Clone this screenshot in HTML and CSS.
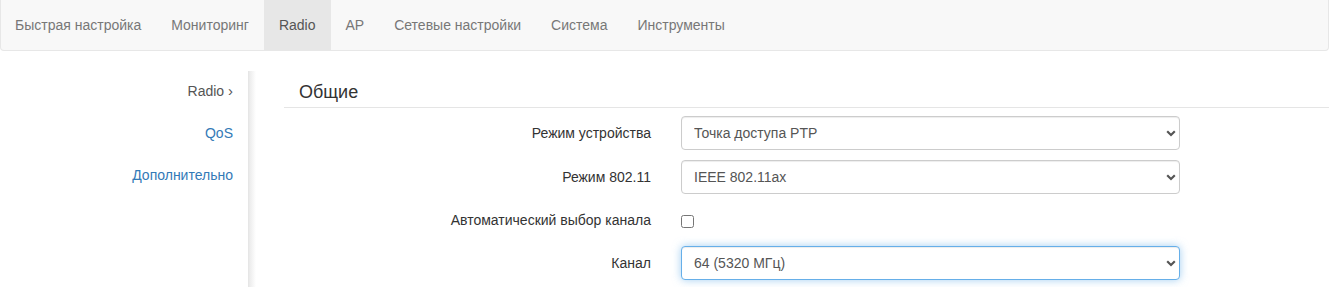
FILE: index.html
```html
<!DOCTYPE html>
<html lang="ru">
<head>
<meta charset="utf-8">
<title>Radio</title>
<link rel="stylesheet" href="styles.css">
</head>
<body>
<nav class="navbar">
  <ul class="nav-menu">
    <li><a href="#">Быстрая настройка</a></li>
    <li><a href="#">Мониторинг</a></li>
    <li class="active"><a href="#">Radio</a></li>
    <li><a href="#">AP</a></li>
    <li><a href="#">Сетевые настройки</a></li>
    <li><a href="#">Система</a></li>
    <li><a href="#">Инструменты</a></li>
  </ul>
</nav>
<div class="page">
  <aside class="sidebar">
    <ul class="side-nav">
      <li class="current"><a href="#">Radio <span class="caret">›</span></a></li>
      <li><a href="#">QoS</a></li>
      <li><a href="#">Дополнительно</a></li>
    </ul>
  </aside>
  <main class="main">
    <h4 class="section-title">Общие</h4>
    <form class="form">
      <div class="row">
        <label class="label">Режим устройства</label>
        <div class="select-wrap">
          <select class="select"><option>Точка доступа PTP</option></select>
          <svg class="chev" width="10" height="7" viewBox="0 0 10 7"><path d="M1.2 1.3 L5 5 L8.8 1.3" fill="none" stroke="#555" stroke-width="2.2"/></svg>
        </div>
      </div>
      <div class="row">
        <label class="label">Режим 802.11</label>
        <div class="select-wrap">
          <select class="select"><option>IEEE 802.11ax</option></select>
          <svg class="chev" width="10" height="7" viewBox="0 0 10 7"><path d="M1.2 1.3 L5 5 L8.8 1.3" fill="none" stroke="#555" stroke-width="2.2"/></svg>
        </div>
      </div>
      <div class="row row-check">
        <label class="label">Автоматический выбор канала</label>
        <div class="check-wrap"><input type="checkbox" class="check"></div>
      </div>
      <div class="row">
        <label class="label">Канал</label>
        <div class="select-wrap">
          <select class="select focus"><option>64 (5320 МГц)</option></select>
          <svg class="chev" width="10" height="7" viewBox="0 0 10 7"><path d="M1.2 1.3 L5 5 L8.8 1.3" fill="none" stroke="#555" stroke-width="2.2"/></svg>
        </div>
      </div>
    </form>
  </main>
</div>
</body>
</html>
```
FILE: styles.css
```css
* { box-sizing: border-box; }
html, body {
  margin: 0;
  padding: 0;
  background: #fff;
  font-family: "Liberation Sans", Arial, sans-serif;
  font-size: 14px;
  line-height: 20px;
  color: #333;
}
a { text-decoration: none; }

.navbar {
  background: #f8f8f8;
  border: 1px solid #e7e7e7;
  border-top: 0;
  border-radius: 0 0 4px 4px;
  height: 51px;
  margin-bottom: 20px;
}
.nav-menu {
  list-style: none;
  margin: 0 0 0 -1px;
  padding: 0;
  display: flex;
}
.nav-menu li a {
  display: block;
  padding: 15px 15px;
  height: 50px;
  color: #777;
}
.nav-menu li.active a {
  background: #e7e7e7;
  color: #555;
}

.page {
  display: flex;
  min-height: 230px;
}
.sidebar {
  width: 256px;
  flex: 0 0 256px;
  background: linear-gradient(to right, #fff 0, #fff 248px, #e4e4e4 248px, #ededed 250px, #f6f6f6 253px, #fff 256px);
}
.side-nav {
  list-style: none;
  margin: 0;
  padding: 0;
  width: 248px;
  text-align: right;
}
.side-nav li + li { margin-top: 2px; }
.side-nav li a {
  display: block;
  padding: 10px 15px;
  color: #337ab7;
}
.side-nav li.current a { color: #555; }
.caret { font-size: 15px; }

.main {
  flex: 1;
  padding-left: 28px;
}
.section-title {
  margin: 0;
  padding: 11px 15px 5px;
  font-size: 18px;
  font-weight: normal;
  line-height: 20px;
  color: #333;
  border-bottom: 1px solid #e5e5e5;
}
.form {
  padding-top: 8px;
}
.row {
  display: grid;
  grid-template-columns: 367px 499px;
  column-gap: 30px;
  align-items: center;
  height: 34px;
  margin-bottom: 10px;
}
.row-check { height: 32px; }
.label {
  text-align: right;
  color: #333;
}
.select-wrap {
  position: relative;
  height: 34px;
}
.select {
  appearance: none;
  -webkit-appearance: none;
  width: 100%;
  height: 34px;
  padding: 6px 12px;
  font-family: inherit;
  font-size: 14px;
  color: #555;
  background: #fff;
  border: 1px solid #ccc;
  border-radius: 4px;
  box-shadow: inset 0 1px 1px rgba(0,0,0,.075);
  outline: none;
}
.select.focus {
  border-color: #66afe9;
  box-shadow: inset 0 1px 1px rgba(0,0,0,.075), 0 0 8px rgba(102,175,233,.6);
}
.chev {
  position: absolute;
  right: 4px;
  top: 14px;
  pointer-events: none;
}
.check-wrap {
  display: flex;
  align-items: center;
  height: 32px;
}
.check {
  margin: 3px 0 0 0;
  width: 13px;
  height: 13px;
}
```
